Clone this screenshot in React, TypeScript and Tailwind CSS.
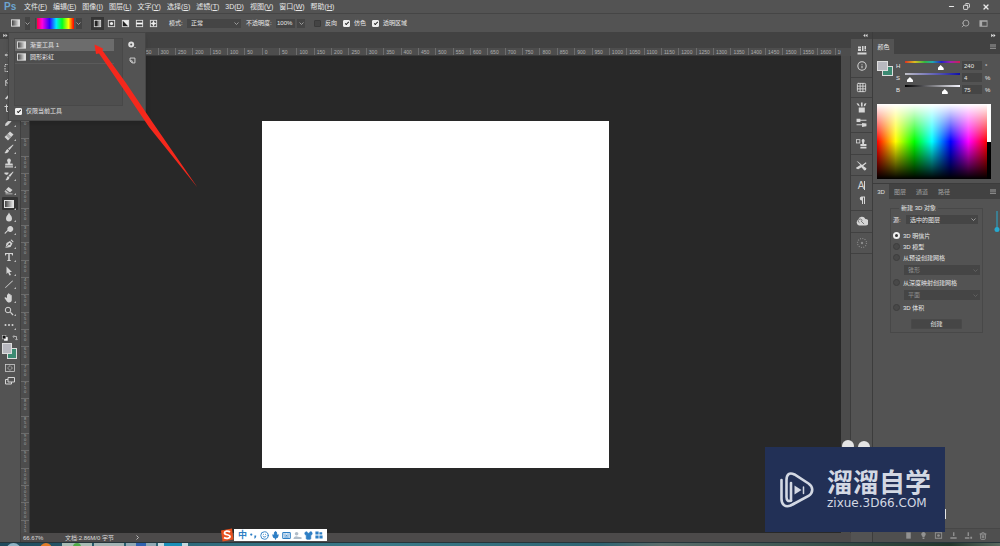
import React from "react";
import type { ReactNode } from "react";
import {
  Search,
  Minus,
  Copy,
  X,
  Info,
  Grid3x3,
  Smile,
  Mic,
  Keyboard,
  Shirt,
  Trash2,
} from "lucide-react";

const MENUS: [string, string][] = [
  ["文件", "F"],
  ["编辑", "E"],
  ["图像", "I"],
  ["图层", "L"],
  ["文字", "Y"],
  ["选择", "S"],
  ["滤镜", "T"],
  ["3D", "D"],
  ["视图", "V"],
  ["窗口", "W"],
  ["帮助", "H"],
];

function Glyph({ children, className = "h-[10px] w-[10px]" }: { children: ReactNode; className?: string }) {
  return (
    <svg viewBox="0 0 20 20" className={className} fill="currentColor" stroke="none" aria-hidden="true">
      {children}
    </svg>
  );
}

function Caret({ className = "" }: { className?: string }) {
  return (
    <svg viewBox="0 0 10 6" className={"h-[3px] w-[5px] shrink-0 " + className} fill="none" stroke="#a5a5a5" strokeWidth="1.8" aria-hidden="true">
      <path d="M1 1l4 4 4-4" />
    </svg>
  );
}

function GradientGlyph({ id, className }: { id: string; className: string }) {
  return (
    <svg viewBox="0 0 20 16" className={className} aria-hidden="true">
      <defs>
        <linearGradient id={id}>
          <stop offset="0" stopColor="#3a3a3a" />
          <stop offset="1" stopColor="#f0f0f0" />
        </linearGradient>
      </defs>
      <rect x="1" y="1" width="18" height="14" fill={`url(#${id})`} stroke="#e0e0e0" strokeWidth="2" />
    </svg>
  );
}

function MenuBar() {
  return (
    <header className="flex h-[14px] shrink-0 items-center border-b border-[#454545] bg-[#535353]">
      <span className="w-[21px] pl-[4px] text-[10px] leading-none font-bold text-[#6da5cf]">Ps</span>
      <nav className="flex flex-1 text-[7px]">
        {MENUS.map(([name, key]) => (
          <button key={key} type="button" className="px-[3px] text-left whitespace-nowrap">
            {name}(<span className="underline">{key}</span>)
          </button>
        ))}
      </nav>
      <div className="flex items-center gap-[8px] pr-[10px]">
        <button type="button" aria-label="最小化"><Minus className="h-[7px] w-[7px]" strokeWidth={4} /></button>
        <button type="button" aria-label="还原"><Copy className="h-[7px] w-[7px] -scale-x-100" strokeWidth={3} /></button>
        <button type="button" aria-label="关闭" className="pl-[4px]"><X className="h-[8px] w-[8px]" strokeWidth={4} /></button>
      </div>
    </header>
  );
}

function Check({ label, checked = false }: { label: string; checked?: boolean }) {
  return (
    <label className="flex items-center gap-[4px] whitespace-nowrap">
      <input
        type="checkbox"
        defaultChecked={checked}
        className="flex h-[7px] w-[7px] appearance-none items-center justify-center rounded-[1px] border border-[#3a3a3a] bg-[#444] checked:border-[#eee] checked:bg-[#eee] checked:after:mb-px checked:after:h-[4px] checked:after:w-[2px] checked:after:rotate-45 checked:after:border-r checked:after:border-b checked:after:border-[#222] checked:after:content-['']"
      />
      {label}
    </label>
  );
}

function Select({ label, value, className, disabled = false }: { label: string; value: string; className: string; disabled?: boolean }) {
  return (
    <span className={"flex items-center bg-[#454545] " + className}>
      <select
        aria-label={label}
        disabled={disabled}
        className={
          disabled
            ? "min-w-0 flex-1 appearance-none pl-[4px] leading-[8px] text-[#8d8d8d]"
            : "min-w-0 flex-1 appearance-none pl-[4px] leading-[8px]"
        }
      >
        <option>{value}</option>
      </select>
      <Caret className={disabled ? "mr-[2px] opacity-30" : "mr-[2px]"} />
    </span>
  );
}

const GRADIENT_TYPES: { name: string; art: ReactNode }[] = [
  { name: "线性渐变", art: <><rect x="3" y="3" width="14" height="14" fill="#555" stroke="#ddd" strokeWidth="2" /><rect x="4" y="4" width="5" height="12" fill="#222" /><rect x="12" y="4" width="4" height="12" fill="#aaa" /></> },
  { name: "径向渐变", art: <><rect x="3" y="3" width="14" height="14" fill="#444" stroke="#ddd" strokeWidth="2" /><circle cx="10" cy="10" r="3.5" fill="#eee" /></> },
  { name: "角度渐变", art: <><rect x="3" y="3" width="14" height="14" fill="#222" stroke="#ddd" strokeWidth="2" /><path d="M10 10L3 3h14v14z" fill="#eee" /></> },
  { name: "对称渐变", art: <><rect x="3" y="3" width="14" height="14" fill="#444" stroke="#ddd" strokeWidth="2" /><rect x="3" y="8" width="14" height="4" fill="#fff" /></> },
  { name: "菱形渐变", art: <><rect x="3" y="3" width="14" height="14" fill="#555" stroke="#ddd" strokeWidth="2" /><path d="M10 3l2 5 5 2-5 2-2 5-2-5-5-2 5-2z" fill="#eee" /></> },
];

function OptionsBar() {
  return (
    <div className="flex h-[18px] shrink-0 items-center bg-[#535353]">
      <button type="button" aria-label="渐变工具预设" className="flex items-center gap-[5px] pl-[11px]">
        <GradientGlyph id="opt" className="h-[8px] w-[9px]" />
        <span className="flex h-[13px] w-[5px] items-center bg-[#444]"><Caret /></span>
      </button>
      <button type="button" aria-label="编辑渐变" className="ml-[5px] flex items-center gap-[2px] border-l border-[#444] pl-[1px]">
        <span className="block h-[11px] w-[37px] bg-[linear-gradient(90deg,#ff0040_0%,#ff00e0_14%,#2a00ff_34%,#00e8ff_52%,#00ff20_68%,#f8ff00_85%,#ff1000_98%)]" />
        <span className="flex h-[11px] w-[6px] items-center bg-[#444]"><Caret /></span>
      </button>
      <div className="ml-[9px] flex gap-px">
        {GRADIENT_TYPES.map((t, i) => (
          <button
            key={t.name}
            type="button"
            aria-label={t.name}
            className={i === 0 ? "flex h-[13px] w-[13px] items-center justify-center bg-[#353535]" : "flex h-[13px] w-[13px] items-center justify-center"}
          >
            <Glyph className="h-[9px] w-[9px]">{t.art}</Glyph>
          </button>
        ))}
      </div>
      <span className="ml-[9px] w-[18px] whitespace-nowrap">模式:</span>
      <Select label="模式" value="正常" className="h-[9px] w-[54px]" />
      <label htmlFor="opacity" className="ml-[5px] w-[30px] whitespace-nowrap">不透明度:</label>
      <input id="opacity" defaultValue="100%" className="h-[9px] w-[19px] bg-[#454545] pl-px" />
      <span className="mr-[9px] ml-[2px] flex h-[9px] w-[8px] items-center justify-center bg-[#454545]"><Caret /></span>
      <div className="flex gap-[6px]">
        <Check label="反向" />
        <Check label="仿色" checked />
        <Check label="透明区域" checked />
      </div>
      <div className="ml-auto flex items-center gap-[9px] pr-[12px]">
        <button type="button" aria-label="搜索"><Search className="h-[9px] w-[9px] -scale-x-100 text-[#aaa]" strokeWidth={2.5} /></button>
        <button type="button" aria-label="工作区">
          <Glyph className="h-[9px] w-[9px] text-[#aaa]"><path d="M1 3h18v14H1zM7 6v9h10V6z" fillRule="evenodd" /></Glyph>
        </button>
      </div>
    </div>
  );
}

const TOOLS: { name: string; art: ReactNode }[] = [
  { name: "移动", art: <path d="M10 1l3 4h-2v4h4V7l4 3-4 3v-2h-4v4h2l-3 4-3-4h2v-4H5v2l-4-3 4-3v2h4V5H7z" /> },
  { name: "选框", art: <rect x="2" y="3" width="16" height="14" fill="none" stroke="currentColor" strokeWidth="2" strokeDasharray="3 2" /> },
  { name: "套索", art: <path d="M4 18c-2-6 0-14 8-15s7 8-1 9-9-3-7-6" fill="none" stroke="currentColor" strokeWidth="2" /> },
  { name: "快速选择", art: <path d="M2 17l8-9 3 3-8 8zM11 6l6-5 1 2-5 6z" /> },
  { name: "裁剪", art: <path d="M5 1v14h14M1 5h14v14" fill="none" stroke="currentColor" strokeWidth="2" /> },
  { name: "吸管", art: <path d="M2 18l1-5 8-8 4 4-8 8zM12 3l2-2 5 5-2 2z" /> },
  { name: "修复画笔", art: <><path d="M1 12L12 1l7 6L8 19z" /><path d="M7 6l7 7M5 8l7 7" stroke="#535353" strokeWidth="1.4" /></> },
  { name: "画笔", art: <path d="M18 1l1 1-8 10-3-3zM7 10l3 3c-1 5-5 6-9 5 3-2 2-6 6-8z" /> },
  { name: "图章", art: <path d="M10 1a4 4 0 0 1 3 6.500l-1 3.500h5l1 4H2l1-4h5L7 7.500A4 4 0 0 1 10 1zM2 16.500h16V19H2z" /> },
  { name: "历史画笔", art: <path d="M18 1l1 1-7 10-3-3zM8 10l3 3c-1 5-5 6-8 5 3-2 2-6 5-8zM1 3h8v2L6 8 1 6z" /> },
  { name: "橡皮擦", art: <><path d="M9 4l8 6-5 5-8-6z" /><path d="M3 10l7 6H4l-3-3z" opacity=".8" /><path d="M3 17h14v1.500H3z" /></> },
  { name: "渐变", art: null },
  { name: "模糊", art: <path d="M10 1c2 5 6 7 6 12a6 6 0 0 1-12 0c0-5 4-7 6-12z" /> },
  { name: "减淡", art: <path d="M12 2a6 6 0 1 1-4 10l-6 6-1-2 6-6a6 6 0 0 1 5-8z" /> },
  { name: "钢笔", art: <><path d="M3 18L5 8l7-4 5 5-4 7zM13 2l5 5 1-2-4-4z" /><path d="M4 17l6-7" stroke="#535353" strokeWidth="1.500" /><circle cx="11" cy="10" r="1.800" fill="#535353" /></> },
  { name: "文字", art: <path d="M2 2h16v5h-1.500L15 4h-3.500v12l2.500 1v1H6v-1l2.500-1V4H5L3.500 7H2z" /> },
  { name: "路径选择", art: <path d="M5 1l11 11h-5l3 6-3 1-3-6-3 3z" /> },
  { name: "直线", art: <path d="M2 17L17 3l1 1L3 18z" /> },
  { name: "抓手", art: <path d="M6 10V4c0-2 2-2 2 0V2c0-2 2-2 2.500 0v1c0-2 2.500-2 2.500 0v2c0-1.500 2.500-1.500 2.500 0v9c0 3-2 5-5 5s-4-1-6-4L1 10c0-2 2-2 3-1z" /> },
  { name: "缩放", art: <><circle cx="8" cy="8" r="5.500" fill="none" stroke="currentColor" strokeWidth="2" /><path d="M12 13l1.500-1.500L19 17l-2 2z" /></> },
  { name: "更多", art: <><circle cx="3" cy="10" r="2" /><circle cx="10" cy="10" r="2" /><circle cx="17" cy="10" r="2" /></> },
];

function Toolbar() {
  return (
    <aside className="flex w-[21px] shrink-0 flex-col border-r border-[#404040] bg-[#535353] text-[#d4d4d4]">
      <div className="flex h-[7px] items-center bg-[#424242] pl-[3px]">
        <Glyph className="h-[5px] w-[5px]"><path d="M1 3l8 7-8 7zM10 3l8 7-8 7z" /></Glyph>
      </div>
      <div className="mt-[9px] grid h-[284px] auto-rows-fr">
        {TOOLS.map((t) => (
          <button
            key={t.name}
            type="button"
            aria-label={t.name}
            className={t.art ? "mx-[2px] flex items-end justify-center pb-[2px]" : "mx-[2px] flex items-center justify-center rounded-[1px] bg-[#333]"}
          >
            {t.art ? <Glyph className="h-[10px] w-[10px]">{t.art}</Glyph> : <GradientGlyph id="tool" className="h-[8px] w-[10px]" />}
            <svg viewBox="0 0 4 4" className="h-[2px] w-[2px] self-end" fill="#bbb" aria-hidden="true"><path d="M4 0v4H0z" /></svg>
          </button>
        ))}
      </div>
      <div className="flex items-center justify-between px-[2px] pt-[3px]">
        <Glyph className="h-[6px] w-[6px]"><rect x="7" y="7" width="12" height="12" fill="#fff" /><rect x="1" y="1" width="12" height="12" fill="#111" stroke="#ccc" strokeWidth="2" /></Glyph>
        <Glyph className="h-[6px] w-[6px]"><path d="M5 5h10v10M7 1L3 5l4 4M11 13l4 4 4-4" fill="none" stroke="currentColor" strokeWidth="2.500" /></Glyph>
      </div>
      <div className="mt-[2px] ml-[2px] grid h-[16px] w-[15px] grid-cols-3 grid-rows-3">
        <button type="button" aria-label="背景色" className="col-span-2 col-start-2 row-span-2 row-start-2 border border-[#ddd] bg-[#3c8a72]" />
        <button type="button" aria-label="前景色" className="col-span-2 col-start-1 row-span-2 row-start-1 border border-[#ddd] bg-[#b8b8bf]" />
      </div>
      <div className="mt-[4px] flex flex-col items-center gap-[3px]">
        <button type="button" aria-label="快速蒙版">
          <Glyph><rect x="1" y="3" width="18" height="14" fill="none" stroke="currentColor" strokeWidth="1.500" /><circle cx="10" cy="10" r="4" fill="none" stroke="currentColor" strokeWidth="1.500" strokeDasharray="2 1" /></Glyph>
        </button>
        <button type="button" aria-label="屏幕模式">
          <Glyph><path d="M6 3h13v9H6zM6 7H1v9h12v-4" fill="none" stroke="currentColor" strokeWidth="2" /></Glyph>
        </button>
      </div>
    </aside>
  );
}

const H_MARKS = Array.from({ length: 47 }, (_, i) => Math.abs(-650 + i * 50));
const V_MARKS = Array.from({ length: 24 }, (_, i) => i * 50);

function Workspace() {
  return (
    <main className="flex min-w-0 flex-1 flex-col">
      <div className="h-[16px] shrink-0 bg-[#424242]" />
      <div className="flex h-[8px] shrink-0 bg-[#4d4d4d] pr-[10px] leading-[8px] text-[#adadad]">
        <div className="flex min-w-0 flex-1 overflow-hidden border-b border-[#3a3a3a] pl-[15px]">
          <div className="-mr-[11px] flex flex-1">
            {H_MARKS.map((m, i) => (
              <span key={i} className="min-w-0 flex-1 border-l border-[#6c6c6c] pl-[2px] text-[5px]">{m}</span>
            ))}
          </div>
        </div>
      </div>
      <div className="flex min-h-0 flex-1">
        <div className="flex w-[9px] shrink-0 flex-col overflow-hidden border-r border-[#3a3a3a] bg-[#4d4d4d] pt-[65px]">
          <div className="-mb-[4px] flex flex-1 flex-col">
            {V_MARKS.map((m) => (
              <span key={m} className="flex min-h-0 flex-1 flex-col border-t border-[#6c6c6c] pl-[3px] text-[4px] leading-[4px] text-[#a8a8a8]">
                {String(m).split("").map((d, i) => (
                  <span key={i}>{d}</span>
                ))}
              </span>
            ))}
          </div>
        </div>
        <div className="flex flex-1 items-center justify-center bg-[#282828]">
          <div className="aspect-square w-[347px] bg-white" />
        </div>
        <div className="w-[10px] shrink-0 border-r border-[#3c3c3c] bg-[#4b4b4b]" />
      </div>
      <div className="flex h-[9px] shrink-0 items-center bg-[#4c4a4a] pl-[2px] text-[#dcdcdc]">
        <span className="w-[42px]">66.67%</span>
        <span>文档:2.86M/0 字节</span>
        <svg viewBox="0 0 6 10" className="ml-[22px] h-[5px] w-[3px]" fill="none" stroke="#bbb" strokeWidth="2" aria-hidden="true"><path d="M1 1l4 4-4 4" /></svg>
      </div>
    </main>
  );
}

const DOCK: { size: string; icons: { name: string; art: ReactNode }[] }[] = [
  {
    size: "h-[39px]",
    icons: [
      { name: "属性", art: <Glyph><path d="M2 3h6v3H2zM2 7h6v5H2zM10 2h3v10h-3zM15 2h3v6h-3zM15 9h3v3h-3zM1 15h18v4H1z" /></Glyph> },
      { name: "信息", art: <Info className="h-[10px] w-[10px]" strokeWidth={2.5} /> },
    ],
  },
  { size: "h-[20px]", icons: [{ name: "色板", art: <Grid3x3 className="h-[11px] w-[11px]" strokeWidth={2} /> }] },
  {
    size: "h-[35px]",
    icons: [
      { name: "画笔预设", art: <Glyph className="h-[11px] w-[11px]"><path d="M5 10h11v9H5zM1 2l4 1 2 5-4-2zM9 1h3v7H9zM15 3l4-1-2 5-3 1z" /></Glyph> },
      { name: "画笔", art: <Glyph className="h-[11px] w-[11px]"><path d="M1 3h7v2h11v2H8v2H1zM1 13h10v-2l8 1v5l-8 1v-3H1z" /></Glyph> },
    ],
  },
  { size: "h-[22px]", icons: [{ name: "仿制源", art: <Glyph className="h-[11px] w-[11px]"><rect x="1" y="3" width="6" height="6" fill="none" stroke="currentColor" strokeWidth="1.500" /><path d="M13 2a3 3 0 0 1 2 5l-.5 4H19v4H8v-4h3.500L11 7a3 3 0 0 1 2-5zM8 16.500h11V19H8z" /></Glyph> }] },
  { size: "h-[21px]", icons: [{ name: "工具预设", art: <Glyph className="h-[11px] w-[11px]"><path d="M1 2l3 1 7 6 7-5 1 2-6 5 6 4-1 3-3 1-5-6-6 4-3-1-1-2 8-5z" /></Glyph> }] },
  {
    size: "h-[35px]",
    icons: [
      { name: "字符", art: <span className="flex items-center text-[10px] leading-none">A<span className="h-[9px] w-px bg-current" /></span> },
      { name: "段落", art: <Glyph><path d="M9 3h7v15h-2V5h-2v13h-2v-7a4 4 0 0 1-1-8z" /></Glyph> },
    ],
  },
  { size: "h-[22px]", icons: [{ name: "库", art: <Glyph className="h-[13px] w-[13px]"><path d="M6 16a5 5 0 0 1-1-9 6 6 0 0 1 11-1 5 5 0 0 1 0 10z" /><path d="M7 12a3 3 0 1 1 4-3M9 9l5 5" fill="none" stroke="#777" strokeWidth="1.500" /></Glyph> }] },
  { size: "h-[21px]", icons: [{ name: "学习", art: <Glyph className="h-[12px] w-[12px] text-[#8c8c8c]"><circle cx="10" cy="10" r="7.500" fill="none" stroke="currentColor" strokeWidth="2" strokeDasharray="1.500 2.400" /><circle cx="10" cy="10" r="2" /></Glyph> }] },
];

function Dock() {
  return (
    <aside className="flex w-[21px] shrink-0 flex-col bg-[#535353] text-[#d6d6d6]">
      <div className="flex h-[7px] items-center justify-end bg-[#424242] pr-[4px]">
        <Glyph className="h-[5px] w-[5px]"><path d="M9 3l-8 7 8 7zM18 3l-8 7 8 7z" /></Glyph>
      </div>
      {DOCK.map((g, i) => (
        <div key={i} className={"flex flex-col items-center justify-evenly border-b border-[#414141] " + g.size}>
          {g.icons.map((ic) => (
            <button key={ic.name} type="button" aria-label={ic.name}>{ic.art}</button>
          ))}
        </div>
      ))}
    </aside>
  );
}

const RANGE =
  "h-[9px] w-[55px] appearance-none bg-transparent [&::-webkit-slider-runnable-track]:h-[9px] [&::-webkit-slider-runnable-track]:bg-[length:100%_2px] [&::-webkit-slider-runnable-track]:bg-no-repeat [&::-webkit-slider-thumb]:mt-[4px] [&::-webkit-slider-thumb]:h-[5px] [&::-webkit-slider-thumb]:w-[6px] [&::-webkit-slider-thumb]:appearance-none [&::-webkit-slider-thumb]:bg-white [&::-webkit-slider-thumb]:[clip-path:polygon(50%_0,100%_60%,100%_100%,0_100%,0_60%)] ";

const CHANNELS = [
  { id: "H", value: 240, max: 360, unit: "°", track: "[&::-webkit-slider-runnable-track]:bg-[linear-gradient(90deg,#e03020,#d8c020_18%,#30b840_36%,#20a8b0_50%,#2020c8_66%,#a020b0_83%,#d02050)]" },
  { id: "S", value: 4, max: 100, unit: "%", track: "[&::-webkit-slider-runnable-track]:bg-[linear-gradient(90deg,#bfbfc4,#1010a8)]" },
  { id: "B", value: 75, max: 100, unit: "%", track: "[&::-webkit-slider-runnable-track]:bg-[linear-gradient(90deg,#000,#f5f5ff)]" },
];

function MenuLines() {
  return (
    <button type="button" aria-label="面板菜单" className="mr-[4px] ml-auto text-[#a0a0a0]">
      <Glyph className="h-[6px] w-[6px]"><path d="M0 2h20v3H0zM0 8h20v3H0zM0 14h20v3H0z" /></Glyph>
    </button>
  );
}

function ColorPanel() {
  return (
    <section className="border-b border-[#3c3c3c]">
      <div className="flex h-[15px] items-center bg-[#424242]">
        <button type="button" className="h-full w-[21px] bg-[#535353]">颜色</button>
        <MenuLines />
      </div>
      <div className="flex pt-[7px] pl-[4px]">
        <div className="grid h-[15px] w-[16px] grid-cols-3 grid-rows-3">
          <button type="button" aria-label="背景颜色" className="col-span-2 col-start-2 row-span-2 row-start-2 border border-[#ddd] bg-[#3c8a72]" />
          <button type="button" aria-label="前景颜色" className="col-span-2 col-start-1 row-span-2 row-start-1 border border-[#ddd] bg-[#b8b8bf]" />
        </div>
        <div className="flex flex-col gap-[3px] pl-[3px]">
          {CHANNELS.map((c) => (
            <div key={c.id} className="flex h-[9px] items-center">
              <label htmlFor={"range-" + c.id} className="w-[9px]">{c.id}</label>
              <input id={"range-" + c.id} type="range" min={0} max={c.max} defaultValue={c.value} className={RANGE + c.track} />
              <input aria-label={c.id + " 数值"} defaultValue={c.value} className="ml-[2px] h-[9px] w-[20px] bg-[#454545] pl-[2px]" />
              <span className="pl-[3px]">{c.unit}</span>
            </div>
          ))}
        </div>
      </div>
      <div className="mt-[10px] mr-[9px] mb-[4px] ml-[4px] flex h-[75px]">
        <div className="flex-1 bg-[linear-gradient(180deg,#fff_0%,#fff0_50%,#0000_50%,#000_100%),linear-gradient(90deg,#f00,#ff0_17%,#0f0_34%,#0ff_50%,#00f_67%,#f0f_83%,#f00)]" />
        <div className="flex w-[4px] flex-col">
          <div className="flex-1 bg-white" />
          <div className="flex-1 bg-black" />
        </div>
      </div>
    </section>
  );
}

function Radio({ label, checked = false }: { label: string; checked?: boolean }) {
  return (
    <label className="flex h-[11px] items-center gap-[3px] whitespace-nowrap">
      <input
        type="radio"
        name="mesh"
        defaultChecked={checked}
        className="h-[7px] w-[7px] appearance-none rounded-full border border-[#3d3d3d] bg-[#484848] checked:border-2 checked:border-[#eee] checked:bg-[#333]"
      />
      {label}
    </label>
  );
}

function ThreeDPanel() {
  return (
    <section className="flex flex-1 flex-col">
      <div className="flex h-[15px] items-center bg-[#424242] text-[#a0a0a0]">
        <button type="button" className="h-full w-[16px] bg-[#535353] text-[#e0e0e0]">3D</button>
        <button type="button" className="w-[22px]">图层</button>
        <button type="button" className="w-[22px]">通道</button>
        <button type="button" className="w-[22px]">路径</button>
        <MenuLines />
      </div>
      <fieldset className="mt-[5px] mr-[17px] ml-[17px] border border-[#484848] px-[2px] pb-[3px]">
        <legend className="ml-[6px] px-[2px] leading-[9px]">新建 3D 对象</legend>
        <div className="mt-[2px] flex items-center">
          <span className="w-[13px] whitespace-nowrap">源:</span>
          <Select label="源" value="选中的图层" className="h-[9px] w-[72px]" />
        </div>
        <div className="mt-[6px]">
          <Radio label="3D 明信片" checked />
          <Radio label="3D 模型" />
          <Radio label="从预设创建网格" />
          <Select label="预设" value="锥形" disabled className="my-[2px] ml-[11px] h-[10px]" />
          <Radio label="从深度映射创建网格" />
          <Select label="深度映射" value="平面" disabled className="my-[2px] ml-[11px] h-[10px]" />
          <Radio label="3D 体积" />
        </div>
        <button type="button" className="mx-auto mt-[6px] block h-[10px] w-[51px] rounded-[1px] border border-[#494949] bg-[#464646] leading-[8px]">创建</button>
      </fieldset>
      <footer className="mt-auto flex h-[14px] items-center justify-end gap-[6px] border-t border-[#474747] bg-[#4f4f4f] pr-[13px] text-[#929292]">
        <Glyph className="h-[9px] w-[9px]"><path d="M5 3h10v14H5z" /></Glyph>
        <Glyph className="h-[9px] w-[9px]"><path d="M10 2a5 5 0 0 1 3 9l-1 3H8l-1-3a5 5 0 0 1 3-9zM8 15h4v3H8z" /></Glyph>
        <Glyph className="h-[9px] w-[9px]"><path d="M2 3h16v14H2zM4 5v10h12V5z" fillRule="evenodd" /><circle cx="10" cy="10" r="3" /></Glyph>
        <Glyph className="h-[9px] w-[9px]"><path d="M9 3h3v8H9zM3 14h14v3H3z" /></Glyph>
        <Glyph className="h-[9px] w-[9px]"><path d="M8 3h3v8H8zM2 14h10v3H2zM14 13h4v4h-4z" /></Glyph>
        <Trash2 className="h-[8px] w-[8px]" strokeWidth={3} />
      </footer>
    </section>
  );
}

function PresetPopup() {
  return (
    <div className="absolute top-[32px] left-[8px] flex w-[138px] flex-col border border-[#454545] bg-[#535353] pt-[5px] pr-[4px] pb-[5px] pl-[5px] shadow-md">
      <div className="flex gap-[5px]">
        <ul className="h-[68px] w-[109px] border border-[#484848] bg-[#4e4e4e] pr-[8px]">
          <li>
            <button type="button" className="flex h-[12px] w-full items-center gap-[4px] bg-[#6c6c6c] pl-[2px]">
              <GradientGlyph id="p1" className="h-[8px] w-[9px]" />渐变工具 1
            </button>
          </li>
          <li>
            <button type="button" className="flex h-[13px] w-full items-center gap-[4px] border-b border-[#5a5a5a] pl-[2px]">
              <GradientGlyph id="p2" className="h-[8px] w-[9px]" />圆形彩虹
            </button>
          </li>
        </ul>
        <div className="flex flex-col items-center gap-[8px] pt-[3px] text-[#ddd]">
          <button type="button" aria-label="预设选项">
            <Glyph className="h-[8px] w-[8px]"><circle cx="8" cy="9" r="5" fill="none" stroke="currentColor" strokeWidth="5" /><path d="M15 15h5l-2.500 3z" /></Glyph>
          </button>
          <button type="button" aria-label="新建预设">
            <Glyph className="h-[7px] w-[7px]"><path d="M9 17L3 11V3h14v14zM9 17v-6H3" fill="none" stroke="currentColor" strokeWidth="2.500" /></Glyph>
          </button>
        </div>
      </div>
      <div className="pt-px pl-px"><Check label="仅限当前工具" checked /></div>
    </div>
  );
}

function Arrow() {
  return (
    <svg viewBox="0 0 104 144" className="pointer-events-none absolute top-[44px] left-[94px] h-[144px] w-[104px]" fill="#f5281c" aria-hidden="true">
      <path d="M0.500 0.500L9 4.500 8.500 6.500 32 39 59 79 103.500 143.500 55 83 28 43 5 9.500 2 10z" />
    </svg>
  );
}

function ImeBar() {
  return (
    <div className="absolute bottom-[4px] left-[220px] flex items-center text-[#2d7ec4]">
      <svg viewBox="0 0 28 28" className="h-[14px] w-[14px]" aria-hidden="true">
        <path d="M2 5L24 1l3 22-22 4z" fill="#e8501e" />
        <path d="M20 8c-4-3-11-2-11 2 0 5 11 2 11 7 0 4-8 5-12 2" fill="none" stroke="#fff" strokeWidth="3.500" />
      </svg>
      <div className="flex h-[12px] items-center gap-[2px] bg-white px-[4px]">
        <span className="text-[9px] leading-none font-bold">中</span>
        <Glyph className="h-[9px] w-[9px]"><circle cx="5" cy="8" r="2.500" /><path d="M12 10h4c0 4-1 6-4 7z" /></Glyph>
        <Smile className="h-[9px] w-[9px]" strokeWidth={2.5} />
        <Mic className="h-[9px] w-[9px]" fill="currentColor" strokeWidth={2.5} />
        <Keyboard className="h-[9px] w-[9px]" strokeWidth={3} />
        <Glyph className="h-[9px] w-[9px] text-[#b0bcc8]"><circle cx="8" cy="6" r="4" /><path d="M1 18c0-7 8-8 10-5l8 1v4z" /></Glyph>
        <Shirt className="h-[9px] w-[9px]" fill="currentColor" />
        <Glyph className="h-[8px] w-[8px]"><path d="M1 1h8v8H1zM11 3h7v6h-7zM1 11h8v8H1zM11 11h8v8h-8z" /></Glyph>
      </div>
    </div>
  );
}

function Watermark() {
  return (
    <div className="absolute right-[55px] bottom-[14px] flex h-[85px] w-[180px] items-center gap-[12px] bg-[#223056] pl-[14px] text-[#d3d8e3]">
      <svg viewBox="0 0 36 38" className="h-[38px] w-[36px] shrink-0" fill="none" stroke="currentColor" strokeWidth="2.600" strokeLinecap="round" aria-hidden="true">
        <path d="M2.500 9v19c0 6 4 8.500 9 6.500l3-1.500" />
        <path d="M12 29.500C9 31 7.500 29 7.500 26V9c0-6 3-8 8-5.500l14 9c5 3.500 5 9 0 12.500l-15 8" />
        <path d="M12 29.500V12" />
        <path d="M15.500 14.500v9l7-4.500z" fill="currentColor" stroke="none" />
        <path d="M24.500 16v6.500" strokeWidth="1.500" />
      </svg>
      <div className="flex flex-col">
        <span className="text-[26px] leading-[28px] font-bold whitespace-nowrap">溜溜自学</span>
        <span className="font-['DejaVu_Sans',sans-serif] text-[12px] leading-[13px] whitespace-nowrap">zixue.3D66.COM</span>
      </div>
    </div>
  );
}

function Taskbar() {
  return (
    <footer className="flex h-[4px] shrink-0 items-start gap-[2px] overflow-hidden border-t border-[#26343a] bg-[linear-gradient(90deg,#1f4a5c,#2f6b7c_20%,#3a7a88_38%,#2e6472_60%,#5a6c6a_66%,#3b5550_80%,#23372c_95%,#5a6a60)] pl-[6px]">
      <span className="h-[15px] w-[15px] shrink-0 rounded-full bg-[#8fb4c4]" />
      <span className="ml-[17px] h-[12px] w-[12px] shrink-0 rounded-full bg-[#e07b28]" />
      <span className="ml-[8px] flex h-full w-[30px] justify-center bg-[#a9bdb5]"><span className="h-[8px] w-[8px] rounded-full bg-[#4faa48]" /></span>
      <span className="h-full w-[30px] bg-[#a3b4b4]" />
      <span className="flex h-full w-[30px] justify-center bg-[#90a9b4]"><span className="h-full w-[10px] bg-[#2f62b0]" /></span>
      <span className="flex h-full w-[30px] justify-center bg-[#c5d8dd]"><span className="h-full w-[18px] bg-[#1a8fb8]" /></span>
    </footer>
  );
}

export default function App() {
  return (
    <div className="relative flex h-screen flex-col overflow-hidden bg-[#535353] font-['Liberation_Sans','Noto_Sans_CJK_SC',sans-serif] text-[6px] leading-[8px] text-[#e8e8e8]">
      <MenuBar />
      <OptionsBar />
      <div className="flex min-h-0 flex-1">
        <Toolbar />
        <Workspace />
        <Dock />
        <aside className="flex w-[128px] shrink-0 flex-col border-l border-[#3c3c3c]">
          <div className="flex h-[7px] items-center justify-end bg-[#424242] pr-[4px]">
            <Glyph className="h-[5px] w-[5px]"><path d="M1 3l8 7-8 7zM10 3l8 7-8 7z" /></Glyph>
          </div>
          <ColorPanel />
          <ThreeDPanel />
        </aside>
      </div>
      <Taskbar />
      <PresetPopup />
      <Arrow />
      <svg viewBox="0 0 6 22" className="absolute top-[211px] right-0 h-[22px] w-[6px]" fill="#27a9cf" aria-hidden="true">
        <path d="M2.500 0h1v18h-1z" />
        <circle cx="3" cy="18.500" r="2.500" />
      </svg>
      <svg viewBox="0 0 30 14" className="absolute right-[129px] bottom-[93px] h-[14px] w-[30px]" fill="#e4e4e4" aria-hidden="true">
        <circle cx="7" cy="7" r="6" />
        <circle cx="23" cy="8" r="6" />
      </svg>
      <div className="absolute right-[54px] bottom-[27px] h-[10px] w-px bg-[#e4e4e4]" />
      <Watermark />
      <ImeBar />
    </div>
  );
}
